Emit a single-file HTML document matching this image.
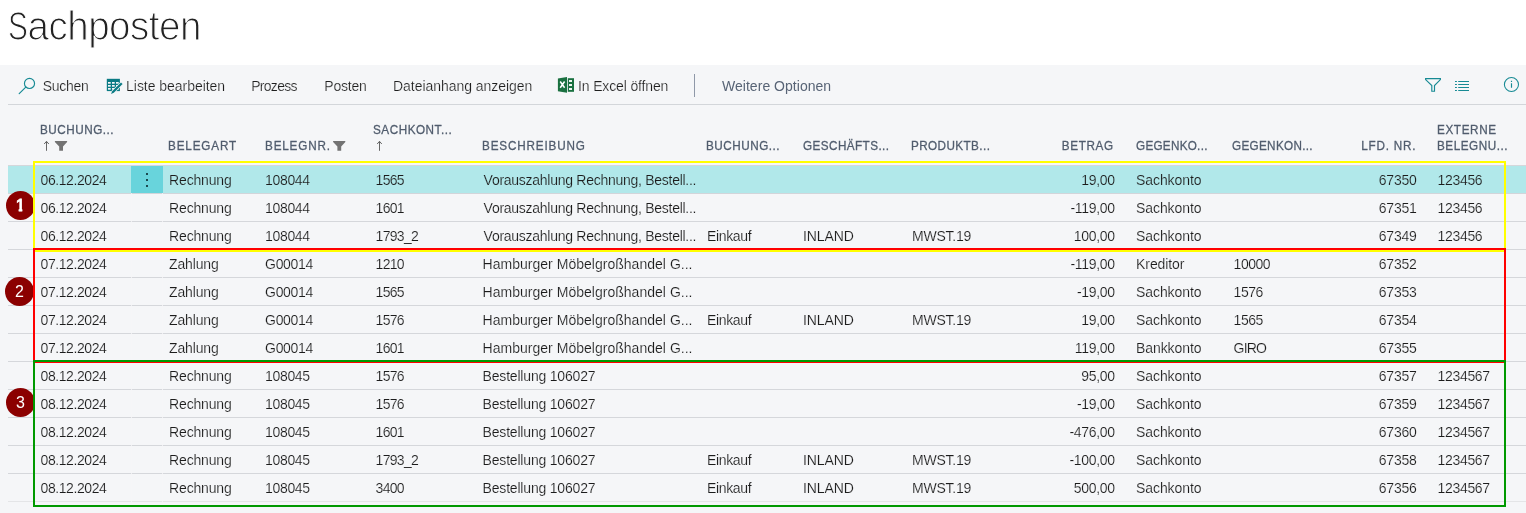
<!DOCTYPE html>
<html lang="de"><head><meta charset="utf-8"><title>Sachposten</title>
<style>
html,body{margin:0;padding:0}
body{width:1526px;height:513px;overflow:hidden;background:#fff;position:relative;font-family:"Liberation Sans",sans-serif;color:#2b2b2b}
.page{position:absolute;left:0;top:0;width:1526px;height:513px;will-change:transform}
.grey{position:absolute;left:0;top:65px;width:1526px;height:448px;background:#f5f6f8}
.title{position:absolute;left:7.8px;top:0px;font-size:41px;line-height:52px;color:#222;letter-spacing:-1.2px;white-space:nowrap;-webkit-text-stroke:1.2px #fff;transform:scaleX(.939);transform-origin:0 0}
.tb{-webkit-text-stroke:.2px #f5f6f8;position:absolute;top:76px;height:20px;line-height:20px;font-size:14px;color:#1e1e1e;white-space:nowrap}
.tb.dim{color:#586476;-webkit-text-stroke:0}
.tbline{position:absolute;left:8px;top:104px;width:1518px;height:1px;background:#d3d6da}
.hline{position:absolute;left:8px;top:165px;width:1518px;height:1px;background:#d5d7db}
.sep{position:absolute;left:694px;top:74px;width:1px;height:23px;background:#8f98a8}
svg{position:absolute;display:block;overflow:visible}
.h{position:absolute;font-size:13px;line-height:16px;color:#505c6d;white-space:nowrap;-webkit-text-stroke:.3px #505c6d;transform:scaleX(.9);transform-origin:0 50%}
.h.r{text-align:right;transform-origin:100% 50%}
.rows{position:absolute;left:0;top:0}
.row{-webkit-text-stroke:.15px #f5f6f8;color:#1c1c1c;position:absolute;left:8px;width:1518px;height:27px;border-bottom:1px solid #d5d7db;font-size:14px;line-height:27px}
.row.sel{-webkit-text-stroke-color:#b1e8ea;background:#b1e8ea;border-bottom-color:#d2d5da}
.row.last{border-bottom-color:#e4e5e7}
.c{position:absolute;top:1px;white-space:nowrap;margin-left:-8px}
.c.r{margin-left:0}
.c0{letter-spacing:-.43px}.c1{letter-spacing:-.17px}.c2{letter-spacing:-.35px}.c3{letter-spacing:-.7px}
.c4{letter-spacing:-.19px}.c4.v{letter-spacing:-.27px}.c4.m{letter-spacing:.02px}
.c5{letter-spacing:-.37px}.c6{letter-spacing:-.14px}.c7{letter-spacing:-.25px}.c8{letter-spacing:-.3px}
.c9{letter-spacing:-.1px}.c10{letter-spacing:-.5px}.c10.g{letter-spacing:-.8px}.c11{letter-spacing:-.25px}.c12{letter-spacing:-.33px}
.gap{position:absolute;top:193px;width:1px;height:310px;background:rgba(245,246,248,.75)}
.more{position:absolute;left:123px;top:0;width:32px;height:27px;background:#68d4dc}
.more i{position:absolute;left:15px;width:2px;height:2px;background:#1a4a50}
.more i:nth-child(1){top:7px}.more i:nth-child(2){top:13px}.more i:nth-child(3){top:19px}
.box{position:absolute;left:33px;width:1469px;border:2px solid}
.circle{position:absolute;width:29px;height:29px;border-radius:50%;background:#8b0000;color:#fff;font-size:16px;line-height:29px;text-align:center}
.one span{position:absolute;left:9.4px;top:0;width:10px;height:29px;text-align:center;font-size:16.5px;-webkit-text-stroke:.9px #fff;clip-path:polygon(0 0,6.9px 0,6.9px 29px,3.3px 29px,3.3px 17.4px,0 17.4px)}
.s1{display:inline-block;transform:scaleX(.775);transform-origin:0 50%;margin-right:-6.6px;letter-spacing:0}
.s2{letter-spacing:-.5px}
</style></head>
<body>
<div class="page">
<div class="grey"></div>
<div class="title"><span class="s1">S</span><span class="s2">achposten</span></div>
<svg style="left:14px;top:70px" width="30" height="30" viewBox="14 70 30 30"><circle cx="29.5" cy="83.4" r="5.05" fill="none" stroke="#178a94" stroke-width="1.15"/><path d="M25.8 87.1 L19.2 93.6" stroke="#178a94" stroke-width="1.2" stroke-linecap="round" fill="none"/></svg>
<div class="tb" style="left:42.7px;letter-spacing:-.3px">Suchen</div>
<svg style="left:100px;top:72px" width="30" height="28" viewBox="100 72 30 28"><path d="M106.8 78.8h13.1v12.3h-13.1z" fill="#0b7b84"/><g fill="#f5f6f8"><rect x="108" y="82" width="2.7" height="1.7"/><rect x="112" y="82" width="2.7" height="1.7"/><rect x="116" y="82" width="2.7" height="1.7"/><rect x="108" y="85" width="2.7" height="1.7"/><rect x="112" y="85" width="2.7" height="1.7"/><rect x="116" y="85" width="2.7" height="1.7"/><rect x="108" y="88" width="2.7" height="1.7"/><rect x="112" y="88" width="2.7" height="1.7"/><rect x="116" y="88" width="2.7" height="1.7"/></g><path d="M121 82.4 L112.2 91.2 L111 94 L113.8 92.8 L122.6 84 Z" fill="#0b7b84" stroke="#f5f6f8" stroke-width="1.3" paint-order="stroke"/></svg>
<div class="tb" style="left:126.1px;letter-spacing:-.04px">Liste bearbeiten</div>
<div class="tb" style="left:251.2px;letter-spacing:-.7px">Prozess</div>
<div class="tb" style="left:324.3px;letter-spacing:-.22px">Posten</div>
<div class="tb" style="left:393px;letter-spacing:-.04px">Dateianhang anzeigen</div>
<svg style="left:550px;top:70px" width="32" height="30" viewBox="550 70 32 30"><path d="M557.9 78.5 L567 76.9 L567 92.8 L557.9 91.3 Z" fill="#1a7040"/><path d="M560.2 81.5 L564.6 87.8 M564.6 81.5 L560.2 87.8" stroke="#fff" stroke-width="1.5" fill="none"/><rect x="567.8" y="78.2" width="6.2" height="13.6" fill="#1a7040"/><g fill="#fff" fill-opacity=".92"><rect x="569" y="80" width="3" height="2"/><rect x="569" y="84" width="3" height="2"/><rect x="569" y="88" width="3" height="2"/></g></svg>
<div class="tb" style="left:578px;letter-spacing:-.14px">In Excel öffnen</div>
<div class="sep"></div>
<div class="tb dim" style="left:722px;letter-spacing:.03px">Weitere Optionen</div>
<svg style="left:1418px;top:70px" width="108" height="30" viewBox="1418 70 108 30"><g fill="none" stroke="#178a94" stroke-width="1.15"><path d="M1425.6 78.6 H1440.4 V79.6 L1434.5 85.5 V91.2 H1431.8 V85.5 L1425.6 79.6 Z" stroke-linejoin="miter"/><path d="M1455 81.5h1.9M1458.2 81.5H1469M1455 84.5h1.9M1458.2 84.5H1469M1455 87.5h1.9M1458.2 87.5H1469M1455 90.5h1.9M1458.2 90.5H1469"/><circle cx="1511.45" cy="84.5" r="7.05" stroke-width="1.05"/><path d="M1511.5 83.2V87.8M1511.5 80.8V82"/></g></svg>
<div class="tbline"></div>
<div class="hline"></div>
<div class="h" style="left:40.2px;top:122px;letter-spacing:0.57px">BUCHUNG...</div>
<svg style="left:36px;top:134px" width="40" height="24" viewBox="36 134 40 24"><path d="M46.5 141.3V150.8M44.2 144L46.5 141.3L48.8 144" fill="none" stroke="#666" stroke-width="1"/><path d="M54.9 141H67.1V142L63 146.6V150.8H59.2V146.6L54.9 142Z" fill="#737373"/></svg>
<div class="h" style="left:168.2px;top:138px;letter-spacing:0.94px">BELEGART</div>
<div class="h" style="left:264.5px;top:138px;letter-spacing:0.92px">BELEGNR.</div>
<svg style="left:330px;top:134px" width="20" height="24" viewBox="330 134 20 24"><path d="M333.1 141H345.3V142L341.2 146.6V150.8H337.4V146.6L333.1 142Z" fill="#737373"/></svg>
<div class="h" style="left:373.4px;top:122px;letter-spacing:0.59px">SACHKONT...</div>
<svg style="left:370px;top:134px" width="20" height="24" viewBox="370 134 20 24"><path d="M379.5 141.3V150.8M377.2 144L379.5 141.3L381.8 144" fill="none" stroke="#666" stroke-width="1"/></svg>
<div class="h" style="left:482.2px;top:138px;letter-spacing:0.93px">BESCHREIBUNG</div>
<div class="h" style="left:706.2px;top:138px;letter-spacing:0.57px">BUCHUNG...</div>
<div class="h" style="left:803.0px;top:138px;letter-spacing:0.48px">GESCHÄFTS...</div>
<div class="h" style="left:911.2px;top:138px;letter-spacing:0.46px">PRODUKTB...</div>
<div class="h r" style="right:412.3px;top:138px;letter-spacing:0.71px">BETRAG</div>
<div class="h" style="left:1136.0px;top:138px;letter-spacing:0.31px">GEGENKO...</div>
<div class="h" style="left:1231.7px;top:138px;letter-spacing:0.36px">GEGENKON...</div>
<div class="h r" style="right:110px;top:138px;letter-spacing:0.9px">LFD. NR.</div>
<div class="h" style="left:1436.7px;top:122px;letter-spacing:0.7px">EXTERNE</div>
<div class="h" style="left:1436.7px;top:138px;letter-spacing:0.6px">BELEGNU...</div>
<div class="rows">
<div class="row sel" style="top:166px"><span class="more"><i></i><i></i><i></i></span><span class="c c0" style="left:40.6px">06.12.2024</span><span class="c c1" style="left:169.1px">Rechnung</span><span class="c c2" style="left:265.1px">108044</span><span class="c c3" style="left:375.6px">1565</span><span class="c c4 v" style="left:483.6px">Vorauszahlung Rechnung, Bestell...</span><span class="c c8 r" style="right:411.2px">19,00</span><span class="c c9" style="left:1136.1px">Sachkonto</span><span class="c c11 r" style="right:109.5px">67350</span><span class="c c12" style="left:1437.6px">123456</span></div>
<div class="row" style="top:194px"><span class="c c0" style="left:40.6px">06.12.2024</span><span class="c c1" style="left:169.1px">Rechnung</span><span class="c c2" style="left:265.1px">108044</span><span class="c c3" style="left:375.6px">1601</span><span class="c c4 v" style="left:483.6px">Vorauszahlung Rechnung, Bestell...</span><span class="c c8 r" style="right:411.2px">-119,00</span><span class="c c9" style="left:1136.1px">Sachkonto</span><span class="c c11 r" style="right:109.5px">67351</span><span class="c c12" style="left:1437.6px">123456</span></div>
<div class="row" style="top:222px"><span class="c c0" style="left:40.6px">06.12.2024</span><span class="c c1" style="left:169.1px">Rechnung</span><span class="c c2" style="left:265.1px">108044</span><span class="c c3" style="left:375.6px">1793_2</span><span class="c c4 v" style="left:483.6px">Vorauszahlung Rechnung, Bestell...</span><span class="c c5" style="left:707.1px">Einkauf</span><span class="c c6" style="left:803.1px">INLAND</span><span class="c c7" style="left:912.1px">MWST.19</span><span class="c c8 r" style="right:411.2px">100,00</span><span class="c c9" style="left:1136.1px">Sachkonto</span><span class="c c11 r" style="right:109.5px">67349</span><span class="c c12" style="left:1437.6px">123456</span></div>
<div class="row" style="top:250px"><span class="c c0" style="left:40.6px">07.12.2024</span><span class="c c1" style="left:169.1px">Zahlung</span><span class="c c2" style="left:265.1px">G00014</span><span class="c c3" style="left:375.6px">1210</span><span class="c c4 m" style="left:482.6px">Hamburger Möbelgroßhandel G...</span><span class="c c8 r" style="right:411.2px">-119,00</span><span class="c c9" style="left:1136.1px">Kreditor</span><span class="c c10" style="left:1233.6px">10000</span><span class="c c11 r" style="right:109.5px">67352</span></div>
<div class="row" style="top:278px"><span class="c c0" style="left:40.6px">07.12.2024</span><span class="c c1" style="left:169.1px">Zahlung</span><span class="c c2" style="left:265.1px">G00014</span><span class="c c3" style="left:375.6px">1565</span><span class="c c4 m" style="left:482.6px">Hamburger Möbelgroßhandel G...</span><span class="c c8 r" style="right:411.2px">-19,00</span><span class="c c9" style="left:1136.1px">Sachkonto</span><span class="c c10" style="left:1233.6px">1576</span><span class="c c11 r" style="right:109.5px">67353</span></div>
<div class="row" style="top:306px"><span class="c c0" style="left:40.6px">07.12.2024</span><span class="c c1" style="left:169.1px">Zahlung</span><span class="c c2" style="left:265.1px">G00014</span><span class="c c3" style="left:375.6px">1576</span><span class="c c4 m" style="left:482.6px">Hamburger Möbelgroßhandel G...</span><span class="c c5" style="left:707.1px">Einkauf</span><span class="c c6" style="left:803.1px">INLAND</span><span class="c c7" style="left:912.1px">MWST.19</span><span class="c c8 r" style="right:411.2px">19,00</span><span class="c c9" style="left:1136.1px">Sachkonto</span><span class="c c10" style="left:1233.6px">1565</span><span class="c c11 r" style="right:109.5px">67354</span></div>
<div class="row" style="top:334px"><span class="c c0" style="left:40.6px">07.12.2024</span><span class="c c1" style="left:169.1px">Zahlung</span><span class="c c2" style="left:265.1px">G00014</span><span class="c c3" style="left:375.6px">1601</span><span class="c c4 m" style="left:482.6px">Hamburger Möbelgroßhandel G...</span><span class="c c8 r" style="right:411.2px">119,00</span><span class="c c9" style="left:1136.1px">Bankkonto</span><span class="c c10 g" style="left:1233.6px">GIRO</span><span class="c c11 r" style="right:109.5px">67355</span></div>
<div class="row" style="top:362px"><span class="c c0" style="left:40.6px">08.12.2024</span><span class="c c1" style="left:169.1px">Rechnung</span><span class="c c2" style="left:265.1px">108045</span><span class="c c3" style="left:375.6px">1576</span><span class="c c4" style="left:482.6px">Bestellung 106027</span><span class="c c8 r" style="right:411.2px">95,00</span><span class="c c9" style="left:1136.1px">Sachkonto</span><span class="c c11 r" style="right:109.5px">67357</span><span class="c c12" style="left:1437.6px">1234567</span></div>
<div class="row" style="top:390px"><span class="c c0" style="left:40.6px">08.12.2024</span><span class="c c1" style="left:169.1px">Rechnung</span><span class="c c2" style="left:265.1px">108045</span><span class="c c3" style="left:375.6px">1576</span><span class="c c4" style="left:482.6px">Bestellung 106027</span><span class="c c8 r" style="right:411.2px">-19,00</span><span class="c c9" style="left:1136.1px">Sachkonto</span><span class="c c11 r" style="right:109.5px">67359</span><span class="c c12" style="left:1437.6px">1234567</span></div>
<div class="row" style="top:418px"><span class="c c0" style="left:40.6px">08.12.2024</span><span class="c c1" style="left:169.1px">Rechnung</span><span class="c c2" style="left:265.1px">108045</span><span class="c c3" style="left:375.6px">1601</span><span class="c c4" style="left:482.6px">Bestellung 106027</span><span class="c c8 r" style="right:411.2px">-476,00</span><span class="c c9" style="left:1136.1px">Sachkonto</span><span class="c c11 r" style="right:109.5px">67360</span><span class="c c12" style="left:1437.6px">1234567</span></div>
<div class="row" style="top:446px"><span class="c c0" style="left:40.6px">08.12.2024</span><span class="c c1" style="left:169.1px">Rechnung</span><span class="c c2" style="left:265.1px">108045</span><span class="c c3" style="left:375.6px">1793_2</span><span class="c c4" style="left:482.6px">Bestellung 106027</span><span class="c c5" style="left:707.1px">Einkauf</span><span class="c c6" style="left:803.1px">INLAND</span><span class="c c7" style="left:912.1px">MWST.19</span><span class="c c8 r" style="right:411.2px">-100,00</span><span class="c c9" style="left:1136.1px">Sachkonto</span><span class="c c11 r" style="right:109.5px">67358</span><span class="c c12" style="left:1437.6px">1234567</span></div>
<div class="row last" style="top:474px"><span class="c c0" style="left:40.6px">08.12.2024</span><span class="c c1" style="left:169.1px">Rechnung</span><span class="c c2" style="left:265.1px">108045</span><span class="c c3" style="left:375.6px">3400</span><span class="c c4" style="left:482.6px">Bestellung 106027</span><span class="c c5" style="left:707.1px">Einkauf</span><span class="c c6" style="left:803.1px">INLAND</span><span class="c c7" style="left:912.1px">MWST.19</span><span class="c c8 r" style="right:411.2px">500,00</span><span class="c c9" style="left:1136.1px">Sachkonto</span><span class="c c11 r" style="right:109.5px">67356</span><span class="c c12" style="left:1437.6px">1234567</span></div>
</div>
<div class="gap" style="left:131px"></div><div class="gap" style="left:162px"></div>
<div class="circle one" style="left:6px;top:191px"><span>1</span></div>
<div class="circle" style="left:5px;top:277px">2</div>
<div class="circle" style="left:6px;top:388px">3</div>
<div class="box" style="top:161px;height:87px;border-color:#ffff00"></div>
<div class="box" style="top:248px;height:111px;border-color:#ff0000"></div>
<div class="box" style="top:360px;height:143px;border-color:#009900"></div>
</div>
</body></html>
